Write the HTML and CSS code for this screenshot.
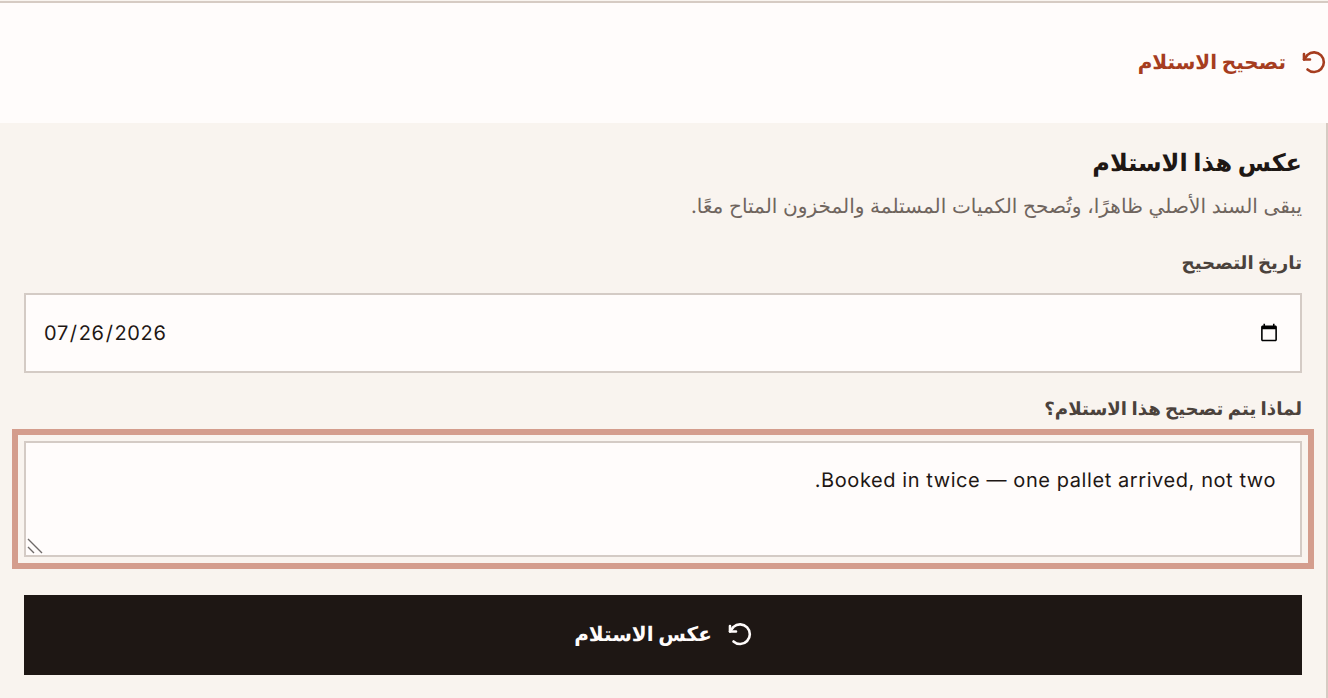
FILE: index.html
```html
<!DOCTYPE html>
<html lang="ar" dir="rtl">
<head>
    <meta charset="UTF-8">
    <title>عكس هذا الاستلام</title>
    <link rel="stylesheet" href="styles.css">
</head>
<body>
    <div class="top-bar">
        <button class="link-btn">
            <svg class="icon" viewBox="0 0 24 24"><path d="M5.5 19.5a9.8 9.8 0 1 0 0-14.6L2 9.5"/><path d="M2 4v5.5h6"/></svg>
            <span>تصحيح الاستلام</span>
        </button>
    </div>
    <div class="panel">
        <h2 class="panel-title">عكس هذا الاستلام</h2>
        <p class="panel-note">يبقى السند الأصلي ظاهرًا، وتُصحح الكميات المستلمة والمخزون المتاح معًا.</p>

        <label class="field-label" for="fixDate">تاريخ التصحيح</label>
        <input class="date-input" id="fixDate" type="date" dir="ltr" value="2026-07-26">

        <label class="field-label reason-label" for="fixReason">لماذا يتم تصحيح هذا الاستلام؟</label>
        <div class="reason-wrap">
            <textarea class="reason-input" id="fixReason">Booked in twice — one pallet arrived, not two.</textarea>
            <svg class="grip" viewBox="0 0 16 16"><path d="M1 1l14 14M1 9l6 6"/></svg>
        </div>

        <button class="submit-btn">
            <svg class="icon" viewBox="0 0 24 24"><path d="M5.5 19.5a9.8 9.8 0 1 0 0-14.6L2 9.5"/><path d="M2 4v5.5h6"/></svg>
            <span>عكس الاستلام</span>
        </button>
    </div>
</body>
</html>
```

FILE: styles.css
```css
* {
    box-sizing: border-box;
}
body {
    margin: 0;
    background: #f9f4ef;
    font-family: Inter, "DejaVu Sans", sans-serif;
    color: #1e1714;
    text-rendering: geometricPrecision;
}
.top-bar {
    height: 122px;
    margin-top: 1px;
    border-top: 2px solid #d6cbc3;
    background: #fffcfb;
    display: flex;
    align-items: center;
    padding: 0 2px 2px 0;
}
.link-btn {
    display: flex;
    align-items: center;
    gap: 16px;
    padding: 0;
    border: none;
    background: none;
    color: #a63d1f;
    font-family: inherit;
    font-size: 20px;
    font-weight: 700;
    text-rendering: inherit;
}
.icon {
    width: 24px;
    height: 24px;
    fill: none;
    stroke: currentColor;
    stroke-width: 2.6;
    stroke-linecap: round;
    stroke-linejoin: round;
}
.panel {
    border-right: 2px solid #d6cbc3;
    padding: 24px;
    min-height: 575px;
    display: flex;
    flex-direction: column;
}
.panel-title {
    margin: 0;
    font-size: 24px;
    line-height: 32px;
    font-weight: 700;
    color: #1e1714;
}
.panel-note {
    margin: 12px 0 0;
    font-size: 20.07px;
    line-height: 30px;
    color: #6f655e;
}
.field-label {
    display: block;
    margin-top: 30px;
    font-size: 18.2px;
    line-height: 24px;
    font-weight: 700;
    color: #4b423c;
}
.date-input {
    display: block;
    width: 100%;
    height: 80px;
    margin-top: 18px;
    padding: 0 19px 0 17px;
    border: 2px solid #d4cbc5;
    border-radius: 0;
    background: #fffcfb;
    color: #1e1714;
    font-family: inherit;
    font-size: 20px;
    letter-spacing: 0.65px;
    text-rendering: inherit;
}
.reason-label {
    margin-top: 24px;
}
.reason-wrap {
    position: relative;
    margin-top: 20px;
}
.reason-input {
    display: block;
    width: 100%;
    height: 116px;
    padding: 22px 24px;
    border: 2px solid #d4cbc5;
    border-radius: 0;
    background: #fffcfb;
    color: #1e1714;
    font-family: inherit;
    font-size: 20px;
    letter-spacing: 0.58px;
    line-height: 30px;
    text-rendering: inherit;
    resize: none;
    outline: 6px solid #d49d8d;
    outline-offset: 6px;
}
.grip {
    position: absolute;
    left: 3px;
    bottom: 3px;
    width: 16px;
    height: 16px;
    fill: none;
    stroke: #6e6a68;
    stroke-width: 1.4;
}
.submit-btn {
    display: flex;
    align-items: center;
    justify-content: center;
    gap: 16px;
    width: 100%;
    height: 80px;
    margin-top: 38px;
    padding: 0 0 2px;
    border: none;
    background: #1e1714;
    color: #fffcfb;
    font-family: inherit;
    font-size: 20px;
    font-weight: 700;
    text-rendering: inherit;
}
```
